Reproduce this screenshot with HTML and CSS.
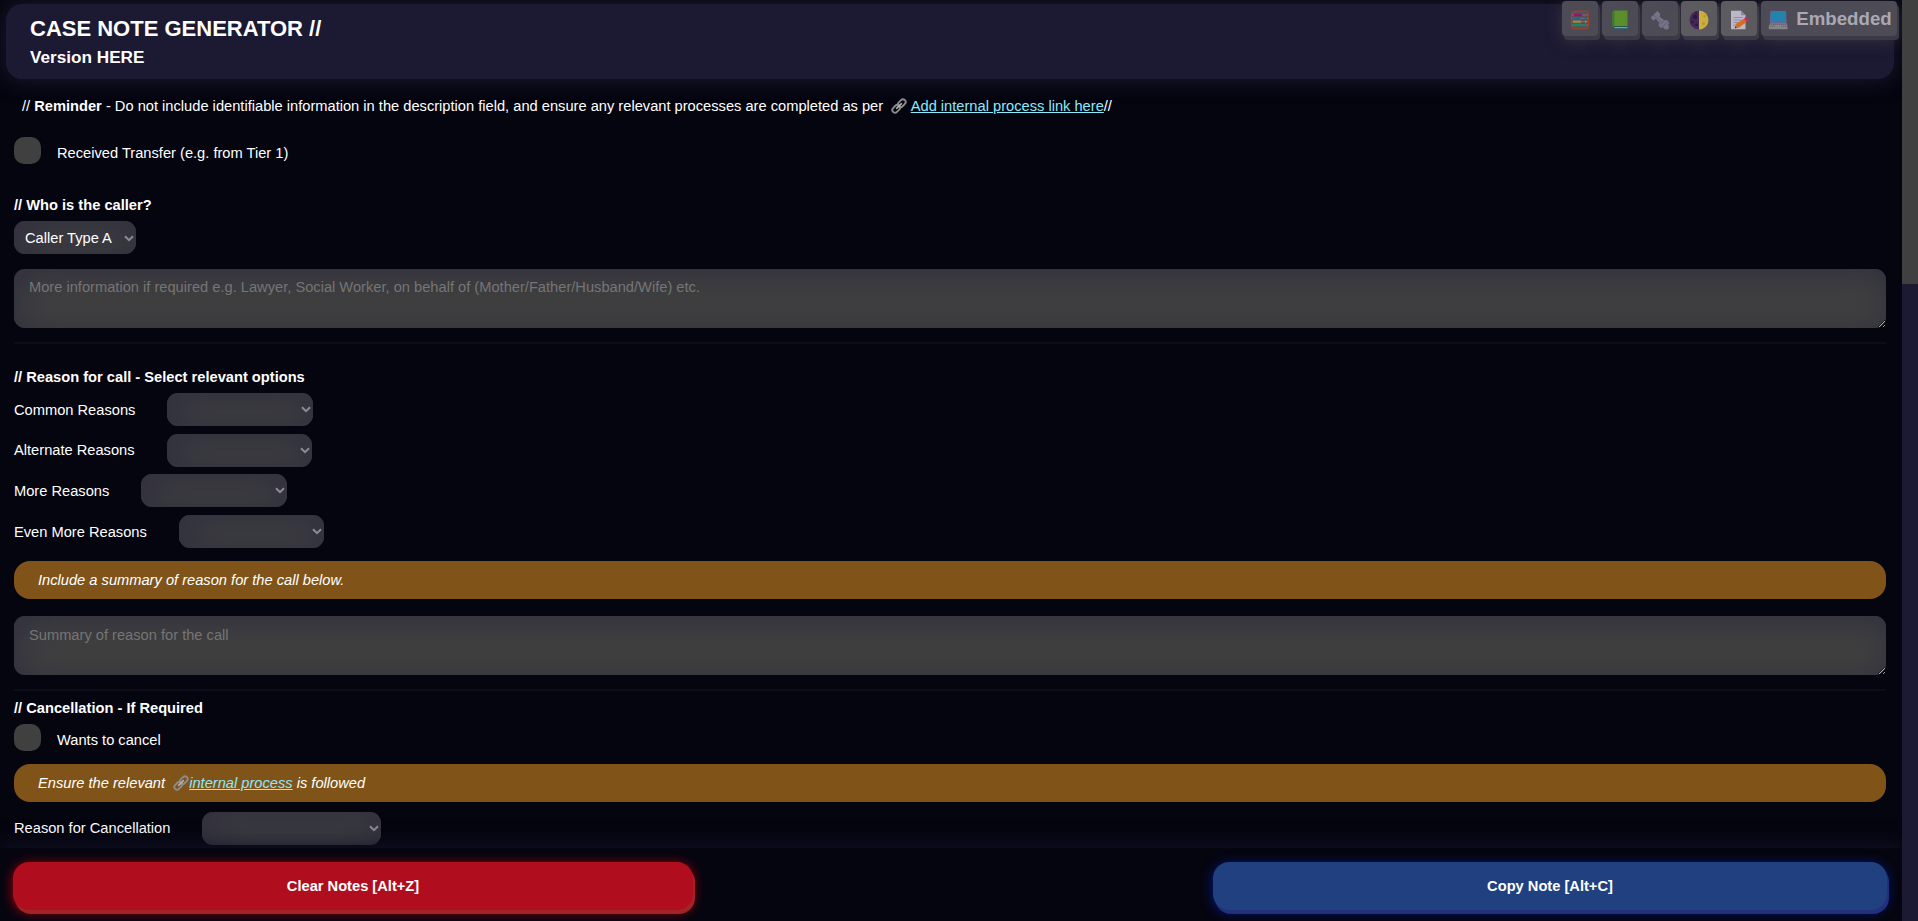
FILE: index.html
```html
<!DOCTYPE html>
<html lang="en">
<head>
<meta charset="utf-8">
<title>Case Note Generator</title>
<link rel="stylesheet" href="styles.css">
</head>
<body>
<svg class="defs" aria-hidden="true">
  <symbol id="chain" viewBox="0 0 16 16">
    <g fill="none" transform="rotate(-45 8 8)">
      <rect x="-.3" y="5.300" width="8.600" height="5.400" rx="2.700" stroke="#8c8c8c" stroke-width="1.900"/>
      <rect x="7.700" y="5.300" width="8.600" height="5.400" rx="2.700" stroke="#8c8c8c" stroke-width="1.900"/>
      <path d="M4.800 8h6.400" stroke="#b8b8b8" stroke-width="1.700" stroke-linecap="round"/>
    </g>
  </symbol>
  <symbol id="chev" viewBox="0 0 10 7"><path d="M1 1.200l4 4 4-4" fill="none" stroke="#8d8b96" stroke-width="2"/></symbol>
</svg>
<main class="page">
  <header class="header">
    <h2 class="title">CASE NOTE GENERATOR //</h2>
    <h3 class="version">Version HERE</h3>
  </header>
  <p class="reminder">// <b>Reminder</b> - Do not include identifiable information in the description field, and ensure any relevant processes are completed as per <svg class="chain chain-top"><use href="#chain"/></svg><a class="link" href="#">Add internal process link here</a>//</p>
  <label class="check check-first"><span class="box"></span>Received Transfer (e.g. from Tier 1)</label>

  <h4 class="heading heading-caller">// Who is the caller?</h4>
  <div class="select select-caller"><span>Caller Type A</span><svg class="chev"><use href="#chev"/></svg></div>
  <textarea class="area area-caller" placeholder="More information if required e.g. Lawyer, Social Worker, on behalf of (Mother/Father/Husband/Wife) etc."></textarea>
  <div class="rule"></div>

  <h4 class="heading heading-reason">// Reason for call - Select relevant options</h4>
  <div class="reasons">
    <div class="row"><span class="label">Common Reasons</span><div class="select w-a"><svg class="chev"><use href="#chev"/></svg></div></div>
    <div class="row"><span class="label">Alternate Reasons</span><div class="select w-b"><svg class="chev"><use href="#chev"/></svg></div></div>
    <div class="row"><span class="label">More Reasons</span><div class="select w-a"><svg class="chev"><use href="#chev"/></svg></div></div>
    <div class="row"><span class="label">Even More Reasons</span><div class="select w-b"><svg class="chev"><use href="#chev"/></svg></div></div>
  </div>
  <div class="note">Include a summary of reason for the call below.</div>
  <textarea class="area area-summary" placeholder="Summary of reason for the call"></textarea>
  <div class="rule"></div>

  <h4 class="heading heading-cancel">// Cancellation - If Required</h4>
  <label class="check"><span class="box"></span>Wants to cancel</label>
  <div class="note note-cancel">Ensure the relevant <svg class="chain chain-note"><use href="#chain"/></svg><a class="link" href="#">internal process</a> is followed</div>
  <div class="row row-cancel"><span class="label">Reason for Cancellation</span><div class="select w-c"><svg class="chev"><use href="#chev"/></svg></div></div>
</main>

<nav class="tools">
  <button class="tool"><svg class="ico" viewBox="0 0 20 20"><rect x="1.500" y="1.200" width="17" height="17.600" rx="3" fill="#55515b" stroke="#97452c" stroke-width="1.300"/><path d="M2.200 5h15.600M2.200 8.300h15.600M2.200 11.600h15.600M2.200 15h15.600" stroke="#7c7880" stroke-width=".8"/><path d="M4 5h8" stroke="#a00f6c" stroke-width="2.400"/><path d="M3 8.300h7M14.500 8.300h2" stroke="#1b6a96" stroke-width="2.200"/><path d="M3 11.600h8M15 11.600h1.500" stroke="#a08a3c" stroke-width="2.200"/><path d="M4 15h7M14 15h2" stroke="#128a5c" stroke-width="2.400"/></svg></button>
  <button class="tool"><svg class="ico" viewBox="0 0 20 20"><path d="M2.500 2L4 .6h13.500V16H4.500l-2 1z" fill="#5b8f2b"/><path d="M2.500 2L4.500.6V16.500l-2 1.500z" fill="#3f7a2e"/><path d="M4 16.200h13.500v3H4a1.500 1.500 0 0 1-1.500-1.500 1.500 1.500 0 0 1 1.500-1.500z" fill="#1e5a5c"/><path d="M4.300 17.700h13.200" stroke="#a9b4b8" stroke-width=".9"/></svg></button>
  <button class="tool"><svg class="ico" viewBox="0 0 20 20"><path d="M.6 7.800L7.300.9l3 3-.8 2.800 5 3.700 2-.6 2.900 2.900-1.200 1.600 1 3.700-1.600 1.600-3-.4-1.300-1.700-2.800.2-2-2.600 1-2-3.700-4.300-2.500 1.800z" fill="#77738a"/><path d="M3.500 5l3.700 3.700M7 7.500l5 5.500M17 12.500l-4.500 4.700M10.500 14l3.500-3.300" stroke="#5f5b70" stroke-width=".9" fill="none"/></svg></button>
  <button class="tool tool-lit"><svg class="ico" viewBox="0 0 20 20"><path d="M10 .5a9.500 9.500 0 0 0 0 19z" fill="#43285a"/><path d="M10 .5a9.500 9.500 0 0 1 0 19z" fill="#cfaf3c"/><circle cx="6" cy="7" r="2.200" fill="#2d1840"/><circle cx="7" cy="3.200" r="1" fill="#2d1840"/><circle cx="3.500" cy="12" r="1.200" fill="#2d1840"/><circle cx="7.500" cy="15" r="1.300" fill="#2d1840"/><circle cx="15.500" cy="6" r="1.200" fill="#b8982f"/><circle cx="14.500" cy="13.500" r="1.500" fill="#b8982f"/></svg></button>
  <button class="tool tool-lit"><svg class="ico" viewBox="0 0 20 20"><path d="M2 .8h10l4.500 4.500v14H2z" fill="#bdb8c9"/><path d="M12 .8v4.500h4.500z" fill="#8d879b"/><path d="M4.500 7.500h9M4.500 10h8M4.500 12.500h5M4.500 15h2" stroke="#8d879b" stroke-width=".9"/><path d="M5.800 18.300l1-4.300 8-5.300 2.700 3.400-7.700 5.600z" fill="#d36f26"/><path d="M14.800 8.700l2-1.500 2.900 3-2.200 1.900z" fill="#d42960"/><path d="M5.800 18.300l.5-2.100 1.500 1.800z" fill="#333"/></svg></button>
  <button class="tool tool-wide"><svg class="ico" viewBox="0 0 20 20"><path d="M2.800 1.300h14.800l.6 11.200h-16z" fill="#2383ae" stroke="#70659b" stroke-width=".8"/><path d="M2 13.300h16.500l1 3.200v2.700H.8v-2.700z" fill="#85848b"/><path d="M2.500 14.500h15.500M2 16.300h5M13 16.300h6" stroke="#5f5e66" stroke-width=".8" stroke-dasharray="1.500 .6"/></svg><span>Embedded</span></button>
</nav>

<footer class="actions">
  <button class="action action-clear">Clear Notes [Alt+Z]</button>
  <button class="action action-copy">Copy Note [Alt+C]</button>
</footer>
<div class="scrollbar"><div class="thumb"></div></div>
</body>
</html>
```
FILE: styles.css
```css
* { box-sizing: border-box; }
html, body { height: 100%; overflow: hidden; }
body {
  margin: 0;
  background: #050510;
  color: #fff;
  font: 11pt/17px "Liberation Sans", Arial, sans-serif;
}
.defs { position: absolute; width: 0; height: 0; }
.page { width: 1902px; height: 921px; padding: 4px 16px 0 14px; overflow: hidden; }
.header {
  height: 75px;
  margin: 0 -8px 0 -8px;
  padding: 12px 24px 0;
  border-radius: 16px;
  background: #1c1932;
  box-shadow: 0 0 20px 2px #19172b;
}
.title { margin: 0; font-size: 22px; line-height: 26px; }
.version { margin: 5px 0 0; font-size: 17.16px; line-height: 20px; }
.reminder { margin: 18px 0 0 8px; line-height: 18px; white-space: nowrap; }
.link { color: #8be9fd; text-decoration: underline; text-underline-offset: 1px; }
.chain { width: 16px; height: 16px; vertical-align: -3px; }
.chain-top { margin: 0 4px 0 3.500px; }
.chain-note { margin: 0 0 0 4px; }
.check { display: flex; gap: 16px; height: 27px; line-height: 33px; }
.check-first { margin-top: 22px; }
.box { width: 27px; height: 27px; border-radius: 10px; background: #404040; }
.heading { margin: 0; font-size: 11pt; line-height: 17px; }
.heading-caller { margin-top: 33px; }
.select {
  display: flex;
  align-items: center;
  justify-content: flex-end;
  height: 33px;
  padding-right: 2px;
  border-radius: 11px;
  background: #404040;
  box-shadow: inset 3px 3px 34px 3px #302f3e;
}
.select-caller { width: 122px; margin-top: 7px; padding: 1px 2px 0 11px; justify-content: space-between; }
.chev { width: 10px; height: 7px; }
.area {
  display: block;
  width: 100%;
  height: 59px;
  padding: 10px 15px;
  border: 0;
  border-radius: 11px;
  background: #404040;
  box-shadow: inset 4px 5px 34px 0 #302f3e;
  color: #fff;
  font: 11pt/17px "Liberation Sans", Arial, sans-serif;
  resize: vertical;
}
.area::placeholder { color: #757575; }
.area-caller { margin-top: 15px; }
.rule { height: 2px; margin-top: 14px; background: #0d0d1a; }
.heading-reason { margin-top: 25px; }
.reasons { display: flex; flex-direction: column; gap: 7.700px; margin-top: 7px; }
.row { display: flex; align-items: center; gap: 32px; height: 33px; }
.reasons .label { padding-top: 1px; }
.w-a { width: 146px; }
.w-b { width: 145px; }
.w-c { width: 179px; }
.note {
  height: 38px;
  margin-top: 13px;
  padding-left: 24px;
  border-radius: 16px;
  background: #805418;
  font-style: italic;
  line-height: 38px;
}
.area-summary { margin-top: 17px; padding-top: 11px; }
.heading-cancel { margin: 9px 0 7px; }
.note-cancel { margin-top: 13px; }
.row-cancel { margin-top: 10px; }
.tools { position: absolute; top: 1px; left: 1562px; display: flex; gap: 3.800px; }
.tool {
  display: flex;
  align-items: center;
  justify-content: center;
  gap: 8px;
  width: 36px;
  height: 35px;
  padding: 0;
  border: 0;
  border-radius: 4px;
  background: #4d4b56;
  box-shadow: 2px 4px 0 #3a3945, 0 4px 16px #55534e80;
  color: #aaa8b4;
  font: bold 18.67px/24px "Liberation Sans", Arial, sans-serif;
}
.tool-lit { background: #5c5b60; }
.tool-wide { width: 136px; padding-left: 2px; }
.ico { flex: none; width: 20px; height: 20px; margin-top: 2px; }
.actions {
  position: absolute;
  top: 848px;
  left: 0;
  display: flex;
  justify-content: space-between;
  width: 1902px;
  height: 73px;
  padding: 14px 15px 0 13px;
  background: #050510;
  box-shadow: 0 0 20px #151428;
}
.action {
  height: 48px;
  padding: 0;
  border: 0;
  border-radius: 16px;
  color: #fff;
  font: bold 11pt/17px "Liberation Sans", Arial, sans-serif;
}
.action-clear { width: 680px; background: #b00e1e; box-shadow: 2px 4px 0 #a02427, 0 2px 12px #b00008; }
.action-copy { width: 674px; background: #20407f; box-shadow: 2px 4px 0 #212f7c, 0 2px 12px #001a88; }
.scrollbar { position: absolute; top: 0; right: 0; width: 16px; height: 921px; background: #1c1932; }
.thumb { height: 284px; background: #404040; }
```
